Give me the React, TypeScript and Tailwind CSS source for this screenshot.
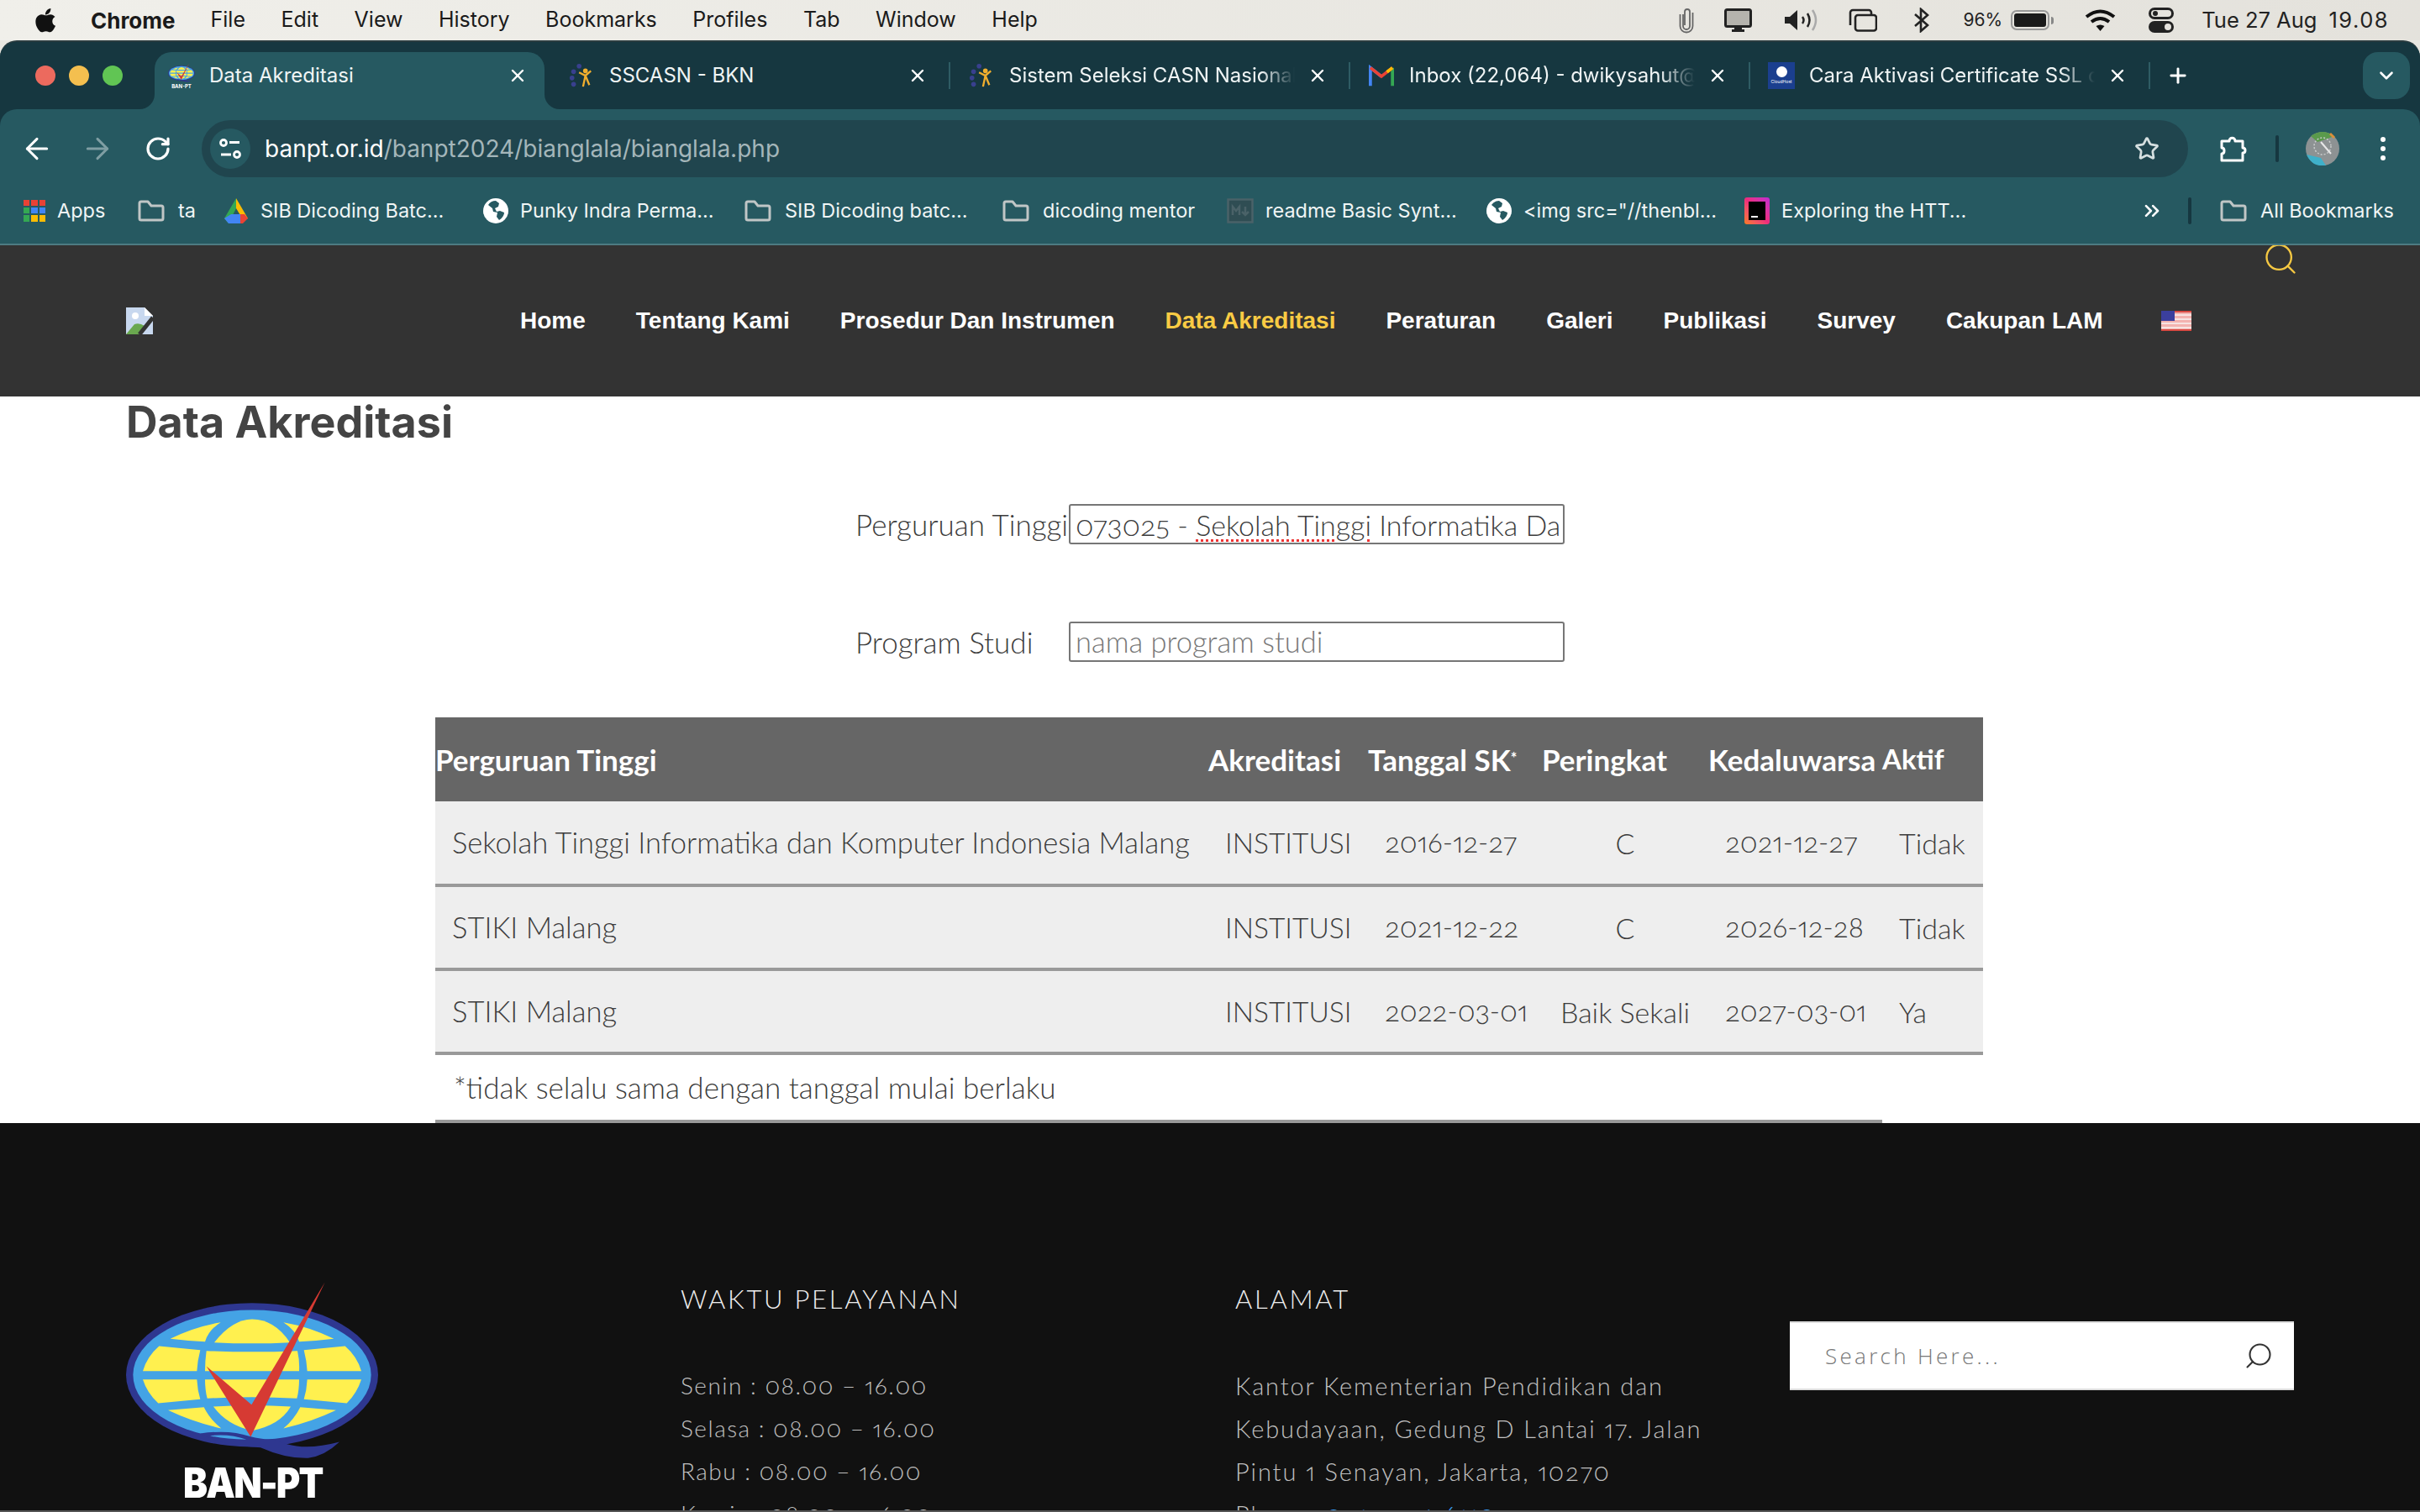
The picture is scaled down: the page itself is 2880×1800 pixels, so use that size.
import { ArrowLeft, ArrowRight, RotateCw, Star, ChevronDown, Plus, X, Search, ChevronsRight } from 'lucide-react'
import type { ReactNode } from 'react'

const sf = 'font-["Inter","Liberation_Sans",sans-serif]'

function AppleLogo() {
  return (
    <svg viewBox="0 0 24 28" className="h-[30px] w-[26px]" fill="#111">
      <path d="M17 1c.2 2-.6 3.700-1.600 4.900-1.100 1.300-2.800 2.300-4.400 2.100-.2-1.900.7-3.600 1.600-4.700C13.700 2 15.500 1.100 17 1zM22.300 20.400c-.6 1.400-.9 2-1.700 3.200-1.100 1.700-2.600 3.800-4.500 3.800-1.700 0-2.100-1.100-4.400-1.100s-2.800 1.100-4.500 1.100c-1.900 0-3.300-1.900-4.400-3.600C-.2 19.500-.5 13.900 1.400 10.900c1.400-2.100 3.500-3.300 5.500-3.300s3.300 1.100 5 1.100c1.600 0 2.600-1.100 4.900-1.100 1.800 0 3.700 1 5 2.700-4.400 2.400-3.700 8.700.5 10.100z" />
    </svg>
  )
}

function StatusIcons() {
  return (
    <>
      <svg viewBox="0 0 18 32" className="h-[32px] w-[18px]" fill="none" stroke="#666" strokeWidth="1.800">
        <path d="M5 9v14a4 4 0 0 0 8 0V6a3 3 0 0 0-6 0v16" />
        <path d="M1.500 9v14a7.500 7.500 0 0 0 15 0V7" />
      </svg>
      <svg viewBox="0 0 33 28" className="ml-[36px] h-[28px] w-[33px]">
        <rect x="1.500" y="1.500" width="30" height="20" rx="2" fill="#b5b3ad" stroke="#222" strokeWidth="3" />
        <path d="M12 23h9v2h3v3H9v-3h3z" fill="#222" />
      </svg>
      <svg viewBox="0 0 39 26" className="ml-[39px] h-[26px] w-[39px]" fill="none">
        <path d="M0 9h6l9-8v24l-9-8H0z" fill="#222" />
        <path d="M21 9q3 4 0 8" stroke="#222" strokeWidth="2.500" />
        <path d="M27 5q5 8 0 16" stroke="#222" strokeWidth="2.500" />
        <path d="M33 1q8 12 0 24" stroke="#aaa" strokeWidth="2.500" />
      </svg>
      <svg viewBox="0 0 34 28" className="ml-[37px] h-[28px] w-[34px]" fill="none" stroke="#222" strokeWidth="2.600">
        <path d="M2 20V5a3 3 0 0 1 3-3h19a3 3 0 0 1 3 3v3" />
        <rect x="8" y="8" width="25" height="18.500" rx="3" />
      </svg>
      <svg viewBox="0 0 18 30" className="ml-[44px] h-[30px] w-[18px]" fill="none" stroke="#222" strokeWidth="2.600">
        <path d="M1 8 16 21 8 28V2l8 7L1 22" />
      </svg>
      <span className="ml-[41px] text-[21px]">96%</span>
      <div className="ml-[10px] flex items-center">
        <div className="flex h-[24px] w-[46px] rounded-[7px] border-2 border-[#999] p-[2px]">
          <div className="h-full w-full rounded-[3px] bg-[#1a1a1a]" />
        </div>
        <div className="ml-[2px] h-[9px] w-[3px] rounded-r-full bg-[#888]" />
      </div>
      <svg viewBox="0 0 37 26" className="ml-[37px] h-[26px] w-[37px]" fill="none" stroke="#111" strokeWidth="4">
        <path d="M2 9q16.500-13 33 0" />
        <path d="M8 15q10.500-8 21 0" />
        <path d="M18.500 26l-5-6q5-3 10 0z" fill="#111" stroke="none" />
      </svg>
      <div className="ml-[39px] flex flex-col gap-[2px]">
        <div className="flex h-[14px] w-[30px] items-center rounded-full border-[3px] border-[#222] pl-[2px]">
          <div className="h-[6px] w-[6px] rounded-full bg-[#222]" />
        </div>
        <div className="flex h-[14px] w-[30px] items-center justify-end rounded-full bg-[#222] pr-[3px]">
          <div className="h-[8px] w-[8px] rounded-full bg-[#e5e3dd]" />
        </div>
      </div>
    </>
  )
}

function MenuBar() {
  const items = ['File', 'Edit', 'View', 'History', 'Bookmarks', 'Profiles', 'Tab', 'Window', 'Help']
  return (
    <div className={`flex h-[48px] items-center justify-between bg-gradient-to-r from-[#f0efea] to-[#e4e2dc] pl-[42px] pr-[37px] text-[25px] text-[#1a1a1a] ${sf}`}>
      <div className="flex items-center">
        <AppleLogo />
        <span className="ml-[40px] text-[26px] font-bold">Chrome</span>
        <div className="ml-[42px] flex gap-[42.500px]">
          {items.map((i) => <span key={i}>{i}</span>)}
        </div>
      </div>
      <div className="flex items-center text-[#222]">
        <StatusIcons />
        <span className="ml-[33px] text-[25.500px]">Tue 27 Aug</span>
        <span className="ml-[14px] text-[25.500px] tracking-[1.500px]">19.08</span>
      </div>
    </div>
  )
}

function GlobeMark({ className }: { className: string }) {
  return (
    <svg viewBox="150 130 900 650" className={className}>
      <ellipse cx="600" cy="471" rx="450" ry="257" fill="#2e3790" />
      <ellipse cx="600" cy="471" rx="425" ry="232" fill="#44a3e5" />
      <g fill="#fff04f">
        <path d="M465 355Q530 272 600 272Q680 272 735 355Q600 362 465 355Z" />
        <path d="M308 342Q390 300 488 283Q445 310 432 352Q370 350 308 342Z" />
        <path d="M712 283Q810 300 892 342Q830 350 768 352Q755 310 712 283Z" />
        <path d="M268 368L415 382Q405 420 403 457L210 457Q225 405 268 368Z" />
        <path d="M437 385Q600 392 762 385Q770 420 768 457L432 457Q432 420 437 385Z" />
        <path d="M785 382L932 368Q975 405 990 457L797 457Q795 420 785 382Z" />
        <path d="M210 487L403 487Q405 525 415 558L265 572Q225 535 210 487Z" />
        <path d="M432 487L768 487Q768 525 760 555Q600 545 440 555Q432 525 432 487Z" />
        <path d="M797 487L990 487Q975 535 938 572L785 558Q795 525 797 487Z" />
        <path d="M300 597L428 586Q450 630 490 662Q390 640 300 597Z" />
        <path d="M462 584Q600 575 738 584Q700 650 600 670Q510 650 462 584Z" />
        <path d="M772 586L900 597Q810 640 712 662Q750 630 772 586Z" />
      </g>
      <path d="M415 680Q520 665 590 690Q650 705 672 700L725 718Q800 740 912 710Q860 760 800 768Q720 770 630 730L600 728Q500 725 415 680Z" fill="#2e3790" />
      <path d="M450 688Q520 680 580 702Q500 700 450 688Z" fill="#44a3e5" />
      <path d="M860 140L598 577L437 440L595 692Z" fill="#d63a33" />
    </svg>
  )
}

function BanptFavicon() {
  return (
    <div className="flex flex-col items-center">
      <GlobeMark className="h-[23px] w-[32px]" />
      <span className="mt-[2px] text-[6px] font-bold leading-[6px] text-white">BAN-PT</span>
    </div>
  )
}

function Tab({ icon, title, active, fade }: { icon: ReactNode; title: string; active?: boolean; fade?: boolean }) {
  return (
    <div className="relative flex h-[80px] w-[464px] shrink-0 items-center pl-[16px] pr-[20px]">
      {active && (
        <>
          <div className="absolute inset-x-0 bottom-0 top-[12px] rounded-t-[20px] bg-[#265961]" />
          <div className="absolute bottom-0 left-[-18px] h-[18px] w-[18px] bg-[#265961]">
            <div className="h-full w-full rounded-br-[18px] bg-[#163740]" />
          </div>
          <div className="absolute bottom-0 right-[-18px] h-[18px] w-[18px] bg-[#265961]">
            <div className="h-full w-full rounded-bl-[18px] bg-[#163740]" />
          </div>
        </>
      )}
      <div className="relative flex h-[32px] w-[32px] shrink-0 items-center justify-center">{icon}</div>
      <span className={`relative ml-[17px] w-[340px] overflow-hidden whitespace-nowrap text-[24px] text-[#f0f5f5] ${fade ? 'mask-r-from-88%' : ''}`}>{title}</span>
      <X className="relative ml-auto h-[24px] w-[24px] shrink-0 text-white" strokeWidth={2.4} />
      {!active && <div className="absolute right-[-7px] h-[32px] w-[2px] bg-[#2e5c64]" />}
    </div>
  )
}

function SscasnIcon() {
  return (
    <svg viewBox="0 0 32 32" className="h-[30px] w-[30px]">
      <circle cx="6" cy="11" r="3" fill="#39408f" />
      <circle cx="13" cy="4" r="3" fill="#39408f" />
      <circle cx="4" cy="19" r="3" fill="#39408f" />
      <circle cx="6" cy="27" r="3" fill="#39408f" />
      <circle cx="21" cy="10" r="3" fill="#f0ae2e" />
      <path d="M13 12 21 16 28 10M21 16 18 30M21 16 26 28" stroke="#f0ae2e" strokeWidth="2.500" fill="none" />
    </svg>
  )
}

function GmailIcon() {
  return (
    <svg viewBox="0 0 32 26" className="h-[26px] w-[30px]" fill="none">
      <path d="M2 26V3l14 11" stroke="#4285f4" strokeWidth="4" />
      <path d="M30 26V3" stroke="#34a853" strokeWidth="4" />
      <path d="M2 3l14 11L30 3" stroke="#ea4335" strokeWidth="4" />
      <path d="M30 3 23 8.500" stroke="#fbbc04" strokeWidth="4" />
    </svg>
  )
}

function CloudHostIcon() {
  return (
    <div className="flex h-[32px] w-[32px] flex-col items-center justify-center overflow-hidden bg-[#1b3f8f]">
      <div className="h-[13px] w-[13px] rounded-full bg-white" />
      <span className="mt-[2px] whitespace-nowrap text-[5px] leading-[7px] text-white">CloudHost</span>
    </div>
  )
}

function TabStrip() {
  return (
    <div className="flex h-[80px] bg-[#163740] pl-[42px] pr-[12px]">
      <div className="flex items-center gap-[16px]">
        <div className="h-[24px] w-[24px] rounded-full bg-[#ec6a5e]" />
        <div className="h-[24px] w-[24px] rounded-full bg-[#f4bf4f]" />
        <div className="h-[24px] w-[24px] rounded-full bg-[#61c554]" />
      </div>
      <div className="ml-[38px] flex min-w-0 items-center gap-[12px]">
        <Tab active icon={<BanptFavicon />} title="Data Akreditasi" />
        <Tab icon={<SscasnIcon />} title="SSCASN - BKN" />
        <Tab icon={<SscasnIcon />} title="Sistem Seleksi CASN Nasional" fade />
        <Tab icon={<GmailIcon />} title="Inbox (22,064) - dwikysahut@gmail.com" fade />
        <Tab icon={<CloudHostIcon />} title="Cara Aktivasi Certificate SSL di" fade />
      </div>
      <Plus className="ml-[26px] h-[28px] w-[28px] self-center text-white" strokeWidth={2.5} />
      <div className="ml-auto flex h-[56px] w-[56px] items-center justify-center self-center rounded-[18px] bg-[#265961]">
        <ChevronDown className="h-[26px] w-[26px] text-white" strokeWidth={2.4} />
      </div>
    </div>
  )
}

function Toolbar() {
  return (
    <div className="flex h-[81px] items-start rounded-t-[20px] bg-[#265961] pl-[24px] pr-[41px] pt-[13px]">
      <div className="flex h-[68px] items-center">
        <ArrowLeft className="h-[40px] w-[40px] text-white" strokeWidth={1.8} />
        <ArrowRight className="ml-[32px] h-[40px] w-[40px] text-[#7f9ea3]" strokeWidth={1.8} />
        <RotateCw className="ml-[36px] h-[32px] w-[32px] text-white" strokeWidth={2.4} />
      </div>
      <div className="ml-[36px] flex h-[68px] min-w-0 flex-1 items-center rounded-full bg-[#20454e] pl-[10px] pr-[34px]">
        <div className="flex h-[48px] w-[48px] items-center justify-center rounded-full bg-[#265961]">
          <svg viewBox="0 0 26 24" className="h-[24px] w-[26px]" fill="none" stroke="white" strokeWidth="2.800">
            <circle cx="5" cy="5" r="3.500" />
            <path d="M12 4.500h12M2 19h12" />
            <circle cx="21" cy="19" r="3.500" />
          </svg>
        </div>
        <span className="ml-[17px] text-[28px] text-white">banpt.or.id</span>
        <span className="text-[28px] text-[#a4b6ba]">/banpt2024/bianglala/bianglala.php</span>
        <Star className="ml-auto h-[30px] w-[30px] text-[#d5dfe0]" strokeWidth={2.2} />
      </div>
      <div className="flex h-[68px] items-center">
        <svg viewBox="0 0 32 32" className="ml-[38px] h-[32px] w-[32px]" fill="none" stroke="white" strokeWidth="3">
          <path d="M2 7h9c0-5 7-5 7 0h9v8c4 0 4 6 0 6v9H2v-8c4 0 4-7 0-7z" strokeLinejoin="round" />
        </svg>
        <div className="ml-[34px] h-[32px] w-[4px] rounded-full bg-[#163740]" />
        <svg viewBox="0 0 40 40" className="ml-[32px] h-[40px] w-[40px]">
          <circle cx="20" cy="20" r="20" fill="#8d9293" />
          <path d="M6 5Q20-5 34 5L26 8 14 12z" fill="#5a9a4c" />
          <path d="M30 1l5 5-2 2-5-5z" fill="#d98d3a" />
          <path d="M1 27l17 4 6 9q-8 1-14-2Q4 34 1 27z" fill="#3fb0c9" />
          <circle cx="20" cy="17" r="10" fill="none" stroke="#c9cccc" strokeWidth="1.500" strokeDasharray="2 2" />
          <path d="M18 12l12 14" stroke="#e8e8e8" strokeWidth="2" />
        </svg>
        <div className="ml-[49px] flex flex-col gap-[5px]">
          <div className="h-[6px] w-[6px] rounded-full bg-white" />
          <div className="h-[6px] w-[6px] rounded-full bg-white" />
          <div className="h-[6px] w-[6px] rounded-full bg-white" />
        </div>
      </div>
    </div>
  )
}

function FolderIcon() {
  return (
    <svg viewBox="0 0 32 26" className="mr-[2px] h-[26px] w-[32px] shrink-0" fill="none" stroke="#c0c6c6" strokeWidth="3">
      <path d="M2 4a2 2 0 0 1 2-2h8l4 5h12a2 2 0 0 1 2 2v13a2 2 0 0 1-2 2H4a2 2 0 0 1-2-2z" strokeLinejoin="round" />
    </svg>
  )
}

function GlobeIcon() {
  return (
    <svg viewBox="0 0 30 30" className="h-[30px] w-[30px] shrink-0">
      <circle cx="15" cy="15" r="15" fill="white" />
      <path d="M15 3q-6 0-9 5l5 4 1 4 5 1-1 5 3 4q6-4 6-9l-5-2-4 1-2-4 4-2 1-4z" fill="#265961" />
    </svg>
  )
}

function Bookmark({ icon, label, className }: { icon: ReactNode; label: string; className?: string }) {
  return (
    <div className={`flex shrink-0 items-center gap-[14px] whitespace-nowrap text-[23.500px] text-[#f0f5f5] ${className ?? ''}`}>
      {icon}
      <span>{label}</span>
    </div>
  )
}

function BookmarksBar() {
  return (
    <div className="flex h-[81px] items-center border-b-2 border-[#4d7b82] bg-[#265961] pl-[28px] pr-[30px]">
      <Bookmark
        className="w-[136px]"
        label="Apps"
        icon={
          <div className="grid h-[26px] w-[26px] shrink-0 grid-cols-3 gap-[2px]">
            {['#e94235', '#e94235', '#e94235', '#34a853', '#4285f4', '#4285f4', '#34a853', '#fbbc04', '#fbbc04'].map((c, i) => (
              <div key={i} style={{ backgroundColor: c }} />
            ))}
          </div>
        }
      />
      <Bookmark className="w-[102px]" icon={<FolderIcon />} label="ta" />
      <Bookmark
        className="w-[309px]"
        label="SIB Dicoding Batc..."
        icon={
          <svg viewBox="0 0 30 30" className="h-[30px] w-[30px] shrink-0">
            <path d="M15 0 1 24l5 6 9-18z" fill="#34a853" />
            <path d="M15 0 29 24l-6 1-8-13z" fill="#fbbc04" />
            <path d="M9 19H22v11H6l-5-6z" fill="#4285f4" />
            <path d="M20 19h5l4 5-6 6h-3z" fill="#ea4335" />
          </svg>
        }
      />
      <Bookmark className="w-[311px]" icon={<GlobeIcon />} label="Punky Indra Perma..." />
      <Bookmark className="w-[307px]" icon={<FolderIcon />} label="SIB Dicoding batc..." />
      <Bookmark className="w-[267px]" icon={<FolderIcon />} label="dicoding mentor" />
      <Bookmark
        className="w-[309px]"
        label="readme Basic Synt..."
        icon={
          <svg viewBox="0 0 32 30" className="h-[30px] w-[32px] shrink-0" fill="none" stroke="#4a6268" strokeWidth="2.500">
            <rect x="1.500" y="1.500" width="29" height="27" fill="#2f4d53" />
            <path d="M7 20v-10l4 5 4-5v10M22 10v10M18 16l4 4 4-4" />
          </svg>
        }
      />
      <Bookmark className="w-[307px]" icon={<GlobeIcon />} label='<img src="//thenbl...' />
      <Bookmark
        className="w-[471px]"
        label="Exploring the HTT..."
        icon={
          <div className="flex h-[32px] w-[30px] shrink-0 items-center justify-center rounded-[3px] bg-gradient-to-tr from-[#f97a12] via-[#ee2a7b] to-[#c026d3]">
            <div className="flex h-[22px] w-[20px] items-end bg-black p-[3px]">
              <div className="h-[2px] w-[8px] bg-white" />
            </div>
          </div>
        }
      />
      <ChevronsRight className="h-[28px] w-[28px] shrink-0 text-white" strokeWidth={2.2} />
      <div className="ml-[29px] h-[32px] w-[4px] rounded-full bg-[#163740]" />
      <Bookmark className="ml-[34px]" icon={<FolderIcon />} label="All Bookmarks" />
    </div>
  )
}

function BrokenImage() {
  return (
    <svg viewBox="0 0 32 32" className="h-[32px] w-[32px]">
      <path d="M0 0h22l10 10v22H0z" fill="#c8d8ef" />
      <path d="M22 0l10 10H22z" fill="#fff" />
      <circle cx="11" cy="10" r="4" fill="#fff" />
      <path d="M0 32 10 20q6-2 12 2l-6 10z" fill="#6aa84f" />
      <path d="M16 32 32 12" stroke="#333" strokeWidth="5" />
    </svg>
  )
}

function UsFlag() {
  return (
    <svg viewBox="0 0 36 24" className="ml-[9px] h-[24px] w-[36px]">
      <rect width="36" height="24" fill="#f3b3b0" />
      <path d="M0 5h36M0 10h36M0 15h36M0 20h36" stroke="#f7e4e2" strokeWidth="2" />
      <path d="M0 1h36M0 23h36" stroke="#d94a43" strokeWidth="2" />
      <rect width="16" height="12" fill="#3b3f9e" />
    </svg>
  )
}

function SiteNav() {
  const items = ['Home', 'Tentang Kami', 'Prosedur Dan Instrumen', 'Data Akreditasi', 'Peraturan', 'Galeri', 'Publikasi', 'Survey', 'Cakupan LAM']
  return (
    <div className='relative flex h-[180px] items-center overflow-hidden bg-[#333] pl-[150px] font-["Liberation_Sans",sans-serif] text-[28px] font-bold text-white'>
      <BrokenImage />
      <div className="ml-[437px] flex items-center gap-[60px]">
        {items.map((i) => (
          <span key={i} className={i === 'Data Akreditasi' ? 'text-[#f9cb44]' : ''}>{i}</span>
        ))}
        <UsFlag />
      </div>
      <Search className="absolute left-[2692px] top-[-6px] h-[44px] w-[44px] text-[#f5c842]" strokeWidth={1.300} />
    </div>
  )
}

const rows = [
  { pt: 'Sekolah Tinggi Informatika dan Komputer Indonesia Malang', sk: '2016-12-27', rank: 'C', exp: '2021-12-27', active: 'Tidak' },
  { pt: 'STIKI Malang', sk: '2021-12-22', rank: 'C', exp: '2026-12-28', active: 'Tidak' },
  { pt: 'STIKI Malang', sk: '2022-03-01', rank: 'Baik Sekali', exp: '2027-03-01', active: 'Ya' },
]

function DataTable() {
  return (
    <table className="ml-[518px] w-[1842px] table-fixed border-collapse text-[34px] font-light text-[#3c3c3c]">
      <colgroup>
        <col className="w-[920px]" />
        <col className="w-[190px]" />
        <col className="w-[207px]" />
        <col className="w-[198px]" />
        <col className="w-[207px]" />
        <col className="w-[120px]" />
      </colgroup>
      <thead>
        <tr className="h-[100px] bg-[#666] text-left text-[35px] font-bold text-white">
          <th>Perguruan Tinggi</th>
          <th>Akreditasi</th>
          <th className="whitespace-nowrap">Tanggal SK<sup className="text-[18px]">*</sup></th>
          <th>Peringkat</th>
          <th>Kedaluwarsa</th>
          <th className="text-[33px]">Aktif</th>
        </tr>
      </thead>
      <tbody>
        {rows.map((r, i) => (
          <tr key={i} className="h-[100px] border-b-4 border-[#999] bg-[#eee]">
            <td className="whitespace-nowrap pl-[20px] text-[34.500px]">{r.pt}</td>
            <td className="pl-[20px] text-[33.500px]">INSTITUSI</td>
            <td className="whitespace-nowrap pl-[20px] text-[33px]">{r.sk}</td>
            <td className="text-center">{r.rank}</td>
            <td className="whitespace-nowrap pl-[20px] text-[33px]">{r.exp}</td>
            <td className="pl-[20px]">{r.active}</td>
          </tr>
        ))}
      </tbody>
    </table>
  )
}

function MainContent() {
  return (
    <div className='h-[865px] bg-white font-["Lato","Liberation_Sans",sans-serif] text-[#3c3c3c] oldstyle-nums proportional-nums'>
      <h1 className={`ml-[150px] pt-[3px] text-[52px] font-bold leading-[56px] text-[#444] ${sf}`}>Data Akreditasi</h1>
      <div className="ml-[1018px] mt-[69px] flex h-[48px] items-center text-[35px] font-light">
        <span className="w-[254px] whitespace-nowrap">Perguruan Tinggi</span>
        <div className="flex h-[48px] w-[590px] items-center overflow-hidden whitespace-nowrap rounded-[3px] border-2 border-[#767676] pl-[6px] text-[34px]">
          <span>
            073025 - <span className="underline decoration-[#ee3333] decoration-dotted decoration-[3px] underline-offset-4">Sekolah Tinggi</span> Informatika Da
          </span>
        </div>
      </div>
      <div className="ml-[1018px] mt-[92px] flex h-[48px] items-center text-[35px] font-light">
        <span className="w-[254px] whitespace-nowrap">Program Studi</span>
        <div className="flex h-[48px] w-[590px] items-center rounded-[3px] border-2 border-[#767676] pl-[6px] text-[34.500px] text-[#777]">
          nama program studi
        </div>
      </div>
      <div className="mt-[66px]">
        <DataTable />
      </div>
      <div className="ml-[518px] flex h-[81px] w-[1722px] items-center border-b-4 border-[#999] pl-[22px] text-[35px] font-light">
        *tidak selalu sama dengan tanggal mulai berlaku
      </div>
    </div>
  )
}

function Footer() {
  return (
    <div className='flex h-[463px] overflow-hidden border-b-2 border-[#555] bg-[#111] pl-[150px] pt-[186px] font-["Lato","Liberation_Sans",sans-serif] text-[29px] font-light tracking-[1.500px] text-[#c0c0c0] oldstyle-nums proportional-nums'>
      <div className="w-[660px]">
        <GlobeMark className="h-[217px] w-[300px]" />
        <div className={`ml-[68px] origin-left scale-x-[0.87] text-[50px] font-black leading-[50px] tracking-[-2px] text-white ${sf}`}>BAN-PT</div>
      </div>
      <div className="w-[660px] pt-[3px]">
        <div className="text-[31px] leading-[40px] tracking-[2.700px] text-[#eee]">WAKTU PELAYANAN</div>
        <div className="mt-[58px] text-[28px] leading-[51px]">
          <div>Senin : 08.00 – 16.00</div>
          <div>Selasa : 08.00 – 16.00</div>
          <div>Rabu : 08.00 – 16.00</div>
          <div>Kamis : 08.00 – 16.00</div>
        </div>
      </div>
      <div className="w-[660px] pt-[3px]">
        <div className="text-[31px] leading-[40px] tracking-[2.700px] text-[#eee]">ALAMAT</div>
        <div className="mt-[58px] leading-[51px] tracking-[1.900px]">
          <div>Kantor Kementerian Pendidikan dan</div>
          <div>Kebudayaan, Gedung D Lantai 17. Jalan</div>
          <div>Pintu 1 Senayan, Jakarta, 10270</div>
          <div>Phone: <span className="text-[#3b9cf0]">021-5794 6110</span></div>
        </div>
      </div>
      <div className="mt-[50px] flex h-[82px] w-[600px] items-center justify-between border-y-2 border-[#ddd] bg-white pl-[42px] pr-[24px] tracking-[3.300px] text-[#777]">
        <span className="font-['Open_Sans',sans-serif] text-[26px]">Search Here...</span>
        <Search className="h-[36px] w-[36px] -scale-x-100 text-[#333]" strokeWidth={1.400} />
      </div>
    </div>
  )
}

export default function App() {
  return (
    <div className="h-[1800px] w-[2880px] overflow-hidden bg-[#e8e7e1]">
      <MenuBar />
      <div className={`overflow-hidden rounded-t-[20px] border-t-2 border-[#2a3c40] bg-[#163740] ${sf}`}>
        <TabStrip />
        <Toolbar />
        <BookmarksBar />
      </div>
      <SiteNav />
      <MainContent />
      <Footer />
    </div>
  )
}
